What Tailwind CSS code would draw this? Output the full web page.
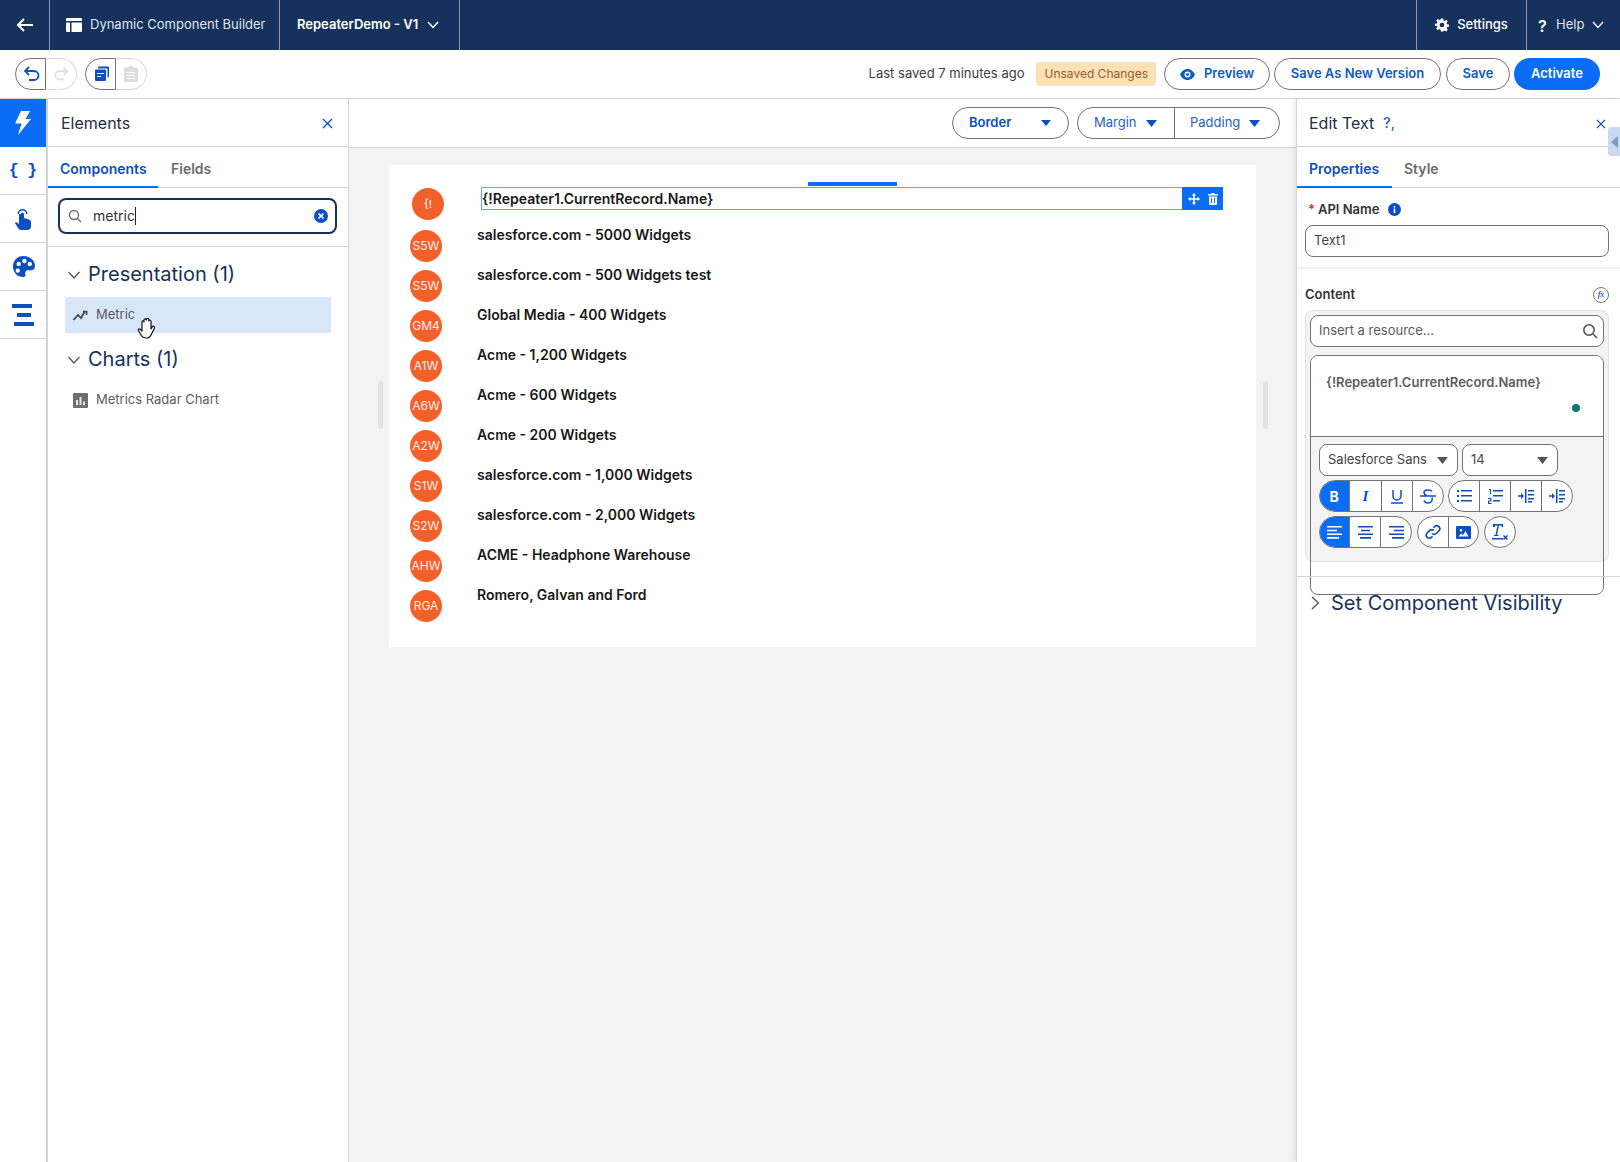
<!doctype html>
<html><head><meta charset="utf-8"><script src="https://cdn.jsdelivr.net/npm/@tailwindcss/browser@4"></script></head>
<body class="font-['Inter','Liberation_Sans',sans-serif]">
<div class="w-[1620px] h-[1162px] overflow-hidden flex flex-col bg-white text-[#181818] relative">
<!-- header -->
<header class="h-[50px] bg-[#16325c] flex text-white text-[13px] shrink-0">
  <div class="w-[50px] border-r border-[#8c9bb0] flex items-center justify-center">
    <svg class="w-[18px] h-[18px]" viewBox="0 0 18 18" fill="none" stroke="white" stroke-width="2"><path d="M17 9H2M8 3L2 9l6 6"/></svg>
  </div>
  <div class="w-[230px] border-r border-[#8c9bb0] flex items-center pl-[16px] gap-[8px] text-[#dfe4ec]">
    <svg class="w-[16px] h-[14px]" viewBox="0 0 16 14" fill="white"><path d="M0 1q0-1 1-1h14q1 0 1 1v2H0zM0 4.500h4V14H1q-1 0-1-1zM5.500 4.500H16V13q0 1-1 1H5.500z"/></svg>
    <span>Dynamic Component Builder</span>
  </div>
  <div class="w-[180px] border-r border-[#8c9bb0] flex items-center pl-[17px] gap-[9px] font-semibold">
    <span>RepeaterDemo - V1</span>
    <svg class="w-[12px] h-[8px]" viewBox="0 0 12 8" fill="none" stroke="white" stroke-width="1.500"><path d="M1 1l5 5.500L11 1"/></svg>
  </div>
  <div class="flex-1"></div>
  <div class="w-[110px] border-l border-[#8c9bb0] flex items-center justify-center gap-[8px] font-medium">
    <svg class="w-[14px] h-[14px]" viewBox="0 0 24 24" fill="white"><path fill-rule="evenodd" d="M10 1h4l.7 3.200 1.900.8L19.400 3.200l2.400 2.900-1.900 2.700.7 1.900 3.300.6v3.800l-3.300.6-.7 1.900 1.900 2.700-2.400 2.900-2.800-1.800-1.900.8L14 23h-4l-.7-3.200-1.900-.8-2.800 1.800-2.400-2.900 1.900-2.700-.7-1.900L.1 13.700V9.900l3.300-.6.700-1.900L2.200 4.700l2.400-2.900L7.400 3.600l1.900-.8zM12 8a4 4 0 100 8 4 4 0 000-8z"/></svg>
    <span>Settings</span>
  </div>
  <div class="w-[94px] border-l border-[#8c9bb0] flex items-center pl-[11px] gap-[8px] text-[#dfe4ec]">
    <span class="text-[16px] font-semibold text-white w-[10px] mt-[1px]">?</span>
    <span>Help</span>
    <svg class="w-[12px] h-[8px]" viewBox="0 0 12 8" fill="none" stroke="white" stroke-width="1.300"><path d="M1 1l5 5.500L11 1"/></svg>
  </div>
</header>
<!-- toolbar -->
<div class="h-[49px] border-b border-[#d4d4d4] flex items-center pl-[15px] pr-[20px] shrink-0">
  <div class="flex h-[32px]">
    <div class="w-[31px] border border-[#747474] rounded-l-full flex items-center justify-center">
      <svg class="w-[18px] h-[18px] ml-[2px]" viewBox="0 0 18 18" fill="none" stroke="#0b4fc1" stroke-width="1.800"><path d="M6 2L2 6l4 4M2 6h9a4.500 4.500 0 010 9H6"/></svg>
    </div>
    <div class="w-[31px] border border-l-0 border-[#d8d8d8] rounded-r-full flex items-center justify-center">
      <svg class="w-[16px] h-[16px]" viewBox="0 0 18 18" fill="none" stroke="#dcdcdc" stroke-width="1.800"><path d="M12 2l4 4-4 4M16 6H7a4.500 4.500 0 000 9h5"/></svg>
    </div>
  </div>
  <div class="flex h-[32px] ml-[8px]">
    <div class="w-[31px] border border-[#747474] rounded-l-full flex items-center justify-center">
      <svg class="w-[16px] h-[16px] ml-[2px]" viewBox="0 0 16 16" fill="#0b4fc1"><path d="M4 1.500q0-1 1-1h9q1 0 1 1v9q0 1-1 1h-.5V3q0-.5-.5-.5H4z"/><path fill-rule="evenodd" d="M2 3.500h9q1 0 1 1V14q0 1-1 1H2q-1 0-1-1V4.500q0-1 1-1zM3 7v1h7V7zM3 10v1h4v-1z"/></svg>
    </div>
    <div class="w-[31px] border border-l-0 border-[#d8d8d8] rounded-r-full flex items-center justify-center">
      <svg class="w-[14px] h-[16px]" viewBox="0 0 14 16" fill="#dcdcdc"><path fill-rule="evenodd" d="M5 0h4v1.500h4q1 0 1 1V15q0 1-1 1H1q-1 0-1-1V2.500q0-1 1-1h4zM3 6v1h8V6zM3 9v1h8V9zM3 12v1h8v-1z"/></svg>
    </div>
  </div>
  <div class="flex-1"></div>
  <span class="text-[13px] text-[#3e3e3c] mr-[12px]">Last saved 7 minutes ago</span>
  <span class="h-[24px] px-[8px] bg-[#fbe1b8] rounded-[3px] text-[12px] text-[#9c5a24] flex items-center mr-[8px]">Unsaved Changes</span>
  <button class="h-[32px] w-[106px] border border-[#747474] rounded-full text-[13px] font-semibold text-[#0b5cc5] flex items-center justify-center gap-[9px] mr-[4px]">
    <svg class="w-[15px] h-[11px]" viewBox="0 0 15 11" fill="#0b5cc5"><path fill-rule="evenodd" d="M7.500 0C11 0 13.700 2.500 15 5.500 13.700 8.500 11 11 7.500 11S1.300 8.500 0 5.500C1.300 2.500 4 0 7.500 0zm0 2.500a3 3 0 100 6 3 3 0 000-6zm0 1.500a1.500 1.500 0 110 3 1.500 1.500 0 010-3z"/></svg>
    Preview</button>
  <button class="h-[32px] w-[167px] border border-[#747474] rounded-full text-[13px] font-semibold text-[#0b5cc5] mr-[5px]">Save As New Version</button>
  <button class="h-[32px] w-[64px] border border-[#747474] rounded-full text-[13px] font-semibold text-[#0b5cc5] mr-[4px]">Save</button>
  <button class="h-[32px] w-[86px] bg-[#0b6cf5] rounded-full text-[13px] font-semibold text-white">Activate</button>
</div>
<!-- main -->
<div class="flex flex-1 min-h-0">
  <!-- rail -->
  <nav class="w-[48px] border-r-2 border-[#d4d4d4] shrink-0 flex flex-col">
    <div class="h-[48px] bg-[#0b6cf5] flex items-center justify-center">
      <svg class="w-[18px] h-[24px]" viewBox="0 0 18 24" fill="white"><path d="M7 0h9L11.500 8H17L4 24l3.500-11.500H1z"/></svg>
    </div>
    <div class="h-[48px] border-b border-[#d4d4d4] flex items-center justify-center text-[#0b4fc1] font-bold text-[17px] gap-[8px] font-['Liberation_Mono',monospace]"><span>{</span><span>}</span></div>
    <div class="h-[48px] border-b border-[#d4d4d4] flex items-center justify-center">
      <svg class="w-[16px] h-[23px]" viewBox="0 0 16 23" fill="#0b4fc1"><path d="M6 7q0-1.500 1.500-1.500T9 7v4l5 1.500q2 .6 2 2.500v4q0 4-4 4H6q-2 0-3-2l-3-5 1-1 3 2V7z"/><path d="M2.500 7a5 5 0 1110 0h-1.500a3.500 3.500 0 10-7 0z"/></svg>
    </div>
    <div class="h-[48px] border-b border-[#d4d4d4] flex items-center justify-center">
      <svg class="w-[23px] h-[23px]" viewBox="0 0 24 24" fill="#0b4fc1"><path fill-rule="evenodd" d="M12 1C5.500 1 1 6 1 12c0 6 4.500 11 10.500 11 2 0 3-1.500 2.500-3-.7-2 .5-4 2.500-4H20c2.500 0 4-2 4-4.500C24 5.500 18.500 1 12 1zM7 7a2.300 2.300 0 110 4.600A2.300 2.300 0 017 7zm6-3a2.300 2.300 0 110 4.600A2.300 2.300 0 0113 4zm5.500 3a2.300 2.300 0 110 4.600 2.300 2.300 0 010-4.600zM6 14a2.300 2.300 0 110 4.600A2.300 2.300 0 016 14z"/></svg>
    </div>
    <div class="h-[48px] border-b border-[#d4d4d4] flex flex-col items-center justify-center gap-[5px]">
      <span class="w-[20px] h-[4px] bg-[#0b4fc1] -ml-[2px]"></span><span class="w-[14px] h-[4px] bg-[#0b4fc1] ml-[2px]"></span><span class="w-[20px] h-[4px] bg-[#0b4fc1] ml-[2px]"></span>
    </div>
  </nav>
  <!-- elements -->
  <aside class="w-[301px] border-r border-[#d4d4d4] shrink-0 flex flex-col">
    <div class="h-[48px] border-b border-[#d4d4d4] flex items-center justify-between pl-[13px] pr-[15px]">
      <span class="text-[16px] text-[#1f2d45]">Elements</span>
      <svg class="w-[11px] h-[11px] mt-[2px]" viewBox="0 0 11 11" stroke="#0b4fc1" stroke-width="1.400"><path d="M1 1l9 9M10 1l-9 9"/></svg>
    </div>
    <div class="h-[41px] border-b border-[#d4d4d4] flex text-[14px] font-semibold">
      <div class="w-[110px] pl-[12px] pt-[11px] text-[#0b4fc1] border-b-2 border-[#0b6cf5] h-[41px]">Components</div>
      <div class="pl-[13px] pt-[11px] text-[#6b6b6b]">Fields</div>
    </div>
    <div class="h-[59px] border-b border-[#d4d4d4] pl-[10px] pt-[10px]">
      <div class="w-[279px] h-[36px] border-2 border-[#16325c] rounded-[8px] flex items-center pl-[8px] pr-[7px]">
        <svg class="w-[14px] h-[14px]" viewBox="0 0 14 14" fill="none" stroke="#706e6b" stroke-width="1.400"><circle cx="6" cy="6" r="4.500"/><path d="M9.500 9.500L13 13"/></svg>
        <span class="ml-[11px] text-[14px] text-[#333] border-r border-[#222] leading-[18px] pr-0">metric</span>
        <span class="flex-1"></span>
        <svg class="w-[14px] h-[14px]" viewBox="0 0 14 14"><circle cx="7" cy="7" r="7" fill="#0b4fc1"/><path d="M4.500 4.500l5 5M9.500 4.500l-5 5" stroke="white" stroke-width="1.600"/></svg>
      </div>
    </div>
    <div class="flex items-center h-[27px] mt-[13px] pl-[20px] gap-[8px] text-[20px] text-[#16325c]">
      <svg class="w-[12px] h-[8px] mt-[3px]" viewBox="0 0 12 8" fill="none" stroke="#555" stroke-width="1.300"><path d="M.5 1l5.500 6 5.500-6"/></svg>
      <span>Presentation (1)</span>
    </div>
    <div class="ml-[17px] mt-[10px] w-[266px] h-[36px] bg-[#d8e6fa] flex items-center pl-[8px] text-[13px] text-[#5c5c5c] gap-[8px]">
      <svg class="w-[15px] h-[12px]" viewBox="0 0 15 12" fill="none" stroke="#444" stroke-width="1.700"><path d="M.5 11L5 6l3 3 4-7M10 2.500h3.500V6"/></svg>
      <span>Metric</span>
    </div>
    <div class="flex items-center h-[27px] mt-[12px] pl-[20px] gap-[8px] text-[20px] text-[#16325c]">
      <svg class="w-[12px] h-[8px] mt-[3px]" viewBox="0 0 12 8" fill="none" stroke="#555" stroke-width="1.300"><path d="M.5 1l5.500 6 5.500-6"/></svg>
      <span>Charts (1)</span>
    </div>
    <div class="ml-[17px] mt-[10px] h-[36px] flex items-center pl-[8px] text-[13px] text-[#5c5c5c] gap-[8px]">
      <svg class="w-[15px] h-[15px]" viewBox="0 0 15 15"><rect width="15" height="15" rx="1" fill="#6f6f6f"/><path d="M3 12V7h2v5zM6.500 12V4h2v8zM10 12V8.500h2V12z" fill="#e8e8e8"/></svg>
      <span>Metrics Radar Chart</span>
    </div>
  </aside>
  <!-- canvas -->
  <main class="flex-1 min-w-0 flex flex-col bg-[#f3f3f3]">
    <div class="h-[49px] bg-white border-b border-[#d4d4d4] flex items-center justify-end pr-[16px] shrink-0 text-[13px]">
      <div class="w-[117px] h-[32px] border border-[#747474] rounded-full flex items-center pl-[16px] pr-[17px] justify-between font-semibold text-[#0b4fc1]">
        <span>Border</span>
        <svg class="w-[10px] h-[6px]" viewBox="0 0 10 6" fill="#0b4fc1"><path d="M0 0h10L5 6z"/></svg>
      </div>
      <div class="ml-[8px] w-[203px] h-[32px] border border-[#747474] rounded-full flex text-[#2c5ec4]">
        <div class="w-[97px] border-r border-[#747474] flex items-center pl-[16px] gap-[9px]"><span>Margin</span><svg class="w-[11px] h-[7px]" viewBox="0 0 11 7" fill="#0b4fc1"><path d="M0 0h11L5.500 7z"/></svg></div>
        <div class="flex items-center pl-[15px] gap-[9px]"><span>Padding</span><svg class="w-[11px] h-[7px]" viewBox="0 0 11 7" fill="#0b4fc1"><path d="M0 0h11L5.500 7z"/></svg></div>
      </div>
    </div>
    <div class="pl-[40px] pt-[17px] relative flex-1">
      <div class="w-[867px] h-[482px] bg-white pt-[23px] relative">
        <!-- first row -->
        <div class="flex items-start h-[41px]">
          <div class="w-[32px] h-[32px] ml-[23px] rounded-full bg-[#f4602a] text-white text-[11px] flex items-center justify-center">{!</div>
          <div class="relative ml-[37px] -mt-[1px] w-[742px] h-[23px] border border-[#62a4ee] text-[14px] font-semibold leading-[21px] text-[#181818]">{!Repeater1.CurrentRecord.Name}
            <div class="absolute -top-[6px] left-[326px] w-[89px] h-[4px] bg-[#0b6cf5]"></div>
            <div class="absolute -top-px -right-px w-[41px] h-[23px] bg-[#0b6cf5] flex items-center justify-center gap-[8px]">
              <svg class="w-[12px] h-[12px]" viewBox="0 0 12 12" fill="white"><path d="M6 0l2.200 2.500H6.800v2.700h2.700V3.800L12 6 9.500 8.200V6.800H6.800v2.700h1.400L6 12 3.800 9.500h1.400V6.800H2.500v1.400L0 6l2.500-2.200v1.400h2.700V2.500H3.800z"/></svg>
              <svg class="w-[10px] h-[12px]" viewBox="0 0 10 12" fill="white"><path fill-rule="evenodd" d="M3.500 0h3v1H10v1.500H0V1h3.500zM1 3.500h8V11q0 1-1 1H2q-1 0-1-1zM3 5v5h1V5zM6 5v5h1V5z"/></svg>
            </div>
          </div>
        </div>
        <!-- rows -->
        <div class="flex items-start h-[40px]"><div class="w-[32px] h-[32px] ml-[21px] mt-[1px] rounded-full bg-[#f4602a] text-white/90 text-[12px] flex items-center justify-center">S5W</div><div class="ml-[35px] -mt-[4px] text-[14px] font-semibold leading-[20px]">salesforce.com - 5000 Widgets</div></div>
        <div class="flex items-start h-[40px]"><div class="w-[32px] h-[32px] ml-[21px] mt-[1px] rounded-full bg-[#f4602a] text-white/90 text-[12px] flex items-center justify-center">S5W</div><div class="ml-[35px] -mt-[4px] text-[14px] font-semibold leading-[20px]">salesforce.com - 500 Widgets test</div></div>
        <div class="flex items-start h-[40px]"><div class="w-[32px] h-[32px] ml-[21px] mt-[1px] rounded-full bg-[#f4602a] text-white/90 text-[12px] flex items-center justify-center">GM4</div><div class="ml-[35px] -mt-[4px] text-[14px] font-semibold leading-[20px]">Global Media - 400 Widgets</div></div>
        <div class="flex items-start h-[40px]"><div class="w-[32px] h-[32px] ml-[21px] mt-[1px] rounded-full bg-[#f4602a] text-white/90 text-[12px] flex items-center justify-center">A1W</div><div class="ml-[35px] -mt-[4px] text-[14px] font-semibold leading-[20px]">Acme - 1,200 Widgets</div></div>
        <div class="flex items-start h-[40px]"><div class="w-[32px] h-[32px] ml-[21px] mt-[1px] rounded-full bg-[#f4602a] text-white/90 text-[12px] flex items-center justify-center">A6W</div><div class="ml-[35px] -mt-[4px] text-[14px] font-semibold leading-[20px]">Acme - 600 Widgets</div></div>
        <div class="flex items-start h-[40px]"><div class="w-[32px] h-[32px] ml-[21px] mt-[1px] rounded-full bg-[#f4602a] text-white/90 text-[12px] flex items-center justify-center">A2W</div><div class="ml-[35px] -mt-[4px] text-[14px] font-semibold leading-[20px]">Acme - 200 Widgets</div></div>
        <div class="flex items-start h-[40px]"><div class="w-[32px] h-[32px] ml-[21px] mt-[1px] rounded-full bg-[#f4602a] text-white/90 text-[12px] flex items-center justify-center">S1W</div><div class="ml-[35px] -mt-[4px] text-[14px] font-semibold leading-[20px]">salesforce.com - 1,000 Widgets</div></div>
        <div class="flex items-start h-[40px]"><div class="w-[32px] h-[32px] ml-[21px] mt-[1px] rounded-full bg-[#f4602a] text-white/90 text-[12px] flex items-center justify-center">S2W</div><div class="ml-[35px] -mt-[4px] text-[14px] font-semibold leading-[20px]">salesforce.com - 2,000 Widgets</div></div>
        <div class="flex items-start h-[40px]"><div class="w-[32px] h-[32px] ml-[21px] mt-[1px] rounded-full bg-[#f4602a] text-white/90 text-[12px] flex items-center justify-center">AHW</div><div class="ml-[35px] -mt-[4px] text-[14px] font-semibold leading-[20px]">ACME - Headphone Warehouse</div></div>
        <div class="flex items-start h-[40px]"><div class="w-[32px] h-[32px] ml-[21px] mt-[1px] rounded-full bg-[#f4602a] text-white/90 text-[12px] flex items-center justify-center">RGA</div><div class="ml-[35px] -mt-[4px] text-[14px] font-semibold leading-[20px]">Romero, Galvan and Ford</div></div>
      </div>
      <div class="absolute left-[29px] top-[233px] w-[5px] h-[48px] bg-[#e3e3e3] rounded"></div>
      <div class="absolute left-[914px] top-[233px] w-[5px] h-[48px] bg-[#e3e3e3] rounded"></div>
    </div>
  </main>
  <!-- right panel -->
  <aside class="w-[324px] shrink-0 border-l border-[#d4d4d4] flex flex-col relative shadow-[-3px_0_4px_rgba(0,0,0,0.06)] bg-white">
    <div class="h-[48px] border-b border-[#d4d4d4] flex items-center pl-[12px] pr-[14px]">
      <span class="text-[16px] text-[#1f2d45]">Edit Text</span>
      <span class="ml-[9px] text-[14px] font-medium text-[#2c5ec4]">?,</span>
      <span class="flex-1"></span>
      <svg class="w-[10px] h-[10px] mt-[2px]" viewBox="0 0 11 11" stroke="#0b4fc1" stroke-width="1.400"><path d="M1 1l9 9M10 1l-9 9"/></svg>
    </div>
    <div class="h-[41px] border-b border-[#d4d4d4] flex text-[14px] font-semibold">
      <div class="w-[95px] pl-[12px] pt-[11px] text-[#0b4fc1] border-b-2 border-[#0b6cf5] h-[41px]">Properties</div>
      <div class="pl-[12px] pt-[11px] text-[#6b6b6b]">Style</div>
    </div>
    <div class="h-[81px] border-b-2 border-[#f0f0f0] pl-[8px] pt-[12px]">
      <div class="flex items-center h-[20px] text-[13px] font-semibold text-[#333] pl-[3px]"><span class="text-[#c23934] mr-[3px]">*</span>API Name
        <svg class="w-[13px] h-[13px] ml-[9px] -mt-[1px]" viewBox="0 0 13 13"><circle cx="6.500" cy="6.500" r="6.500" fill="#0b4fc1"/><rect x="5.700" y="5.500" width="1.600" height="4.500" fill="white"/><rect x="5.700" y="3" width="1.600" height="1.600" fill="white"/></svg>
      </div>
      <div class="w-[304px] h-[32px] mt-[5px] border border-[#747474] rounded-[8px] flex items-center pl-[8px] text-[13px] text-[#444]">Text1</div>
    </div>
    <div class="pl-[8px] pt-[16px]">
      <div class="flex items-center justify-between h-[20px] w-[304px] pr-0 text-[13px] font-semibold text-[#333]">
        <span>Content</span>
        <span class="w-[16px] h-[16px] border border-[#777] rounded-full text-[8px] italic font-semibold text-[#2c5ec4] flex items-center justify-center font-['Liberation_Serif',serif]">fx</span>
      </div>
      <div class="w-[304px] h-[252px] mt-[5px] bg-[#f3f3f3] border border-[#e0e0e0] rounded-[8px] p-[4px]">
        <div class="h-[32px] bg-white border border-[#747474] rounded-[8px] flex items-center pl-[8px] pr-[5px] text-[13px] text-[#5c5c5c] justify-between">
          <span>Insert a resource...</span>
          <svg class="w-[16px] h-[16px]" viewBox="0 0 16 16" fill="none" stroke="#555" stroke-width="1.600"><circle cx="7" cy="7" r="5.200"/><path d="M11 11l4 4"/></svg>
        </div>
        <div class="h-[240px] -mb-[40px] mt-[8px] border border-[#747474] rounded-[8px] bg-transparent overflow-hidden">
          <div class="h-[81px] bg-white border-b border-[#747474] relative pl-[15px] pt-[16px] text-[13px] font-semibold text-[#5c5c5c] leading-[20px]">{!Repeater1.CurrentRecord.Name}
            <span class="absolute left-[261px] top-[48px] w-[8px] h-[8px] rounded-full bg-[#0b7f70]"></span>
          </div>
          <div class="pl-[8px] pt-[7px]">
            <div class="flex gap-[4px]">
              <div class="w-[139px] h-[32px] bg-white border border-[#747474] rounded-[8px] flex items-center justify-between pl-[8px] pr-[9px] text-[13px] text-[#444]"><span>Salesforce Sans</span><svg class="w-[11px] h-[7px]" viewBox="0 0 11 7" fill="#555"><path d="M0 0h11L5.500 7z"/></svg></div>
              <div class="w-[96px] h-[32px] bg-white border border-[#747474] rounded-[8px] flex items-center justify-between pl-[8px] pr-[9px] text-[13px] text-[#444]"><span>14</span><svg class="w-[11px] h-[7px]" viewBox="0 0 11 7" fill="#555"><path d="M0 0h11L5.500 7z"/></svg></div>
            </div>
            <div class="flex gap-[4px] mt-[4px] h-[32px]">
              <div class="flex w-[125px] bg-white border border-[#747474] rounded-full overflow-hidden divide-x divide-[#747474]">
                <div class="flex-1 bg-[#0b6cf5] -my-px -ml-px flex items-center justify-center text-white text-[14px] font-bold">B</div>
                <div class="flex-1 flex items-center justify-center text-[#0b4fc1] text-[15px] font-bold italic font-['Liberation_Serif',serif]">I</div>
                <div class="flex-1 flex items-center justify-center"><svg class="w-[14px] h-[15px]" viewBox="0 0 14 15" fill="none" stroke="#0b4fc1" stroke-width="1.500"><path d="M3 1v6a4 4 0 008 0V1M1 14h12"/></svg></div>
                <div class="flex-1 flex items-center justify-center"><svg class="w-[16px] h-[16px]" viewBox="0 0 16 16" fill="none" stroke="#0b4fc1" stroke-width="1.500"><path d="M12 3.500C11 1.500 4 1 4 4.500c0 1.500 1 2.500 3 3M0 8h16M12 9.500c1 3-1 5.500-4 5.500-2 0-3.500-1-4-2.500"/></svg></div>
              </div>
              <div class="flex w-[125px] bg-white border border-[#747474] rounded-full overflow-hidden divide-x divide-[#747474]">
                <div class="flex-1 flex items-center justify-center"><svg class="w-[15px] h-[12px]" viewBox="0 0 15 12" fill="#0b4fc1"><path d="M0 0h2v2H0zM4 0h11v1.500H4zM0 5h2v2H0zM4 5h11v1.500H4zM0 10h2v2H0zM4 10h11v1.500H4z"/></svg></div>
                <div class="flex-1 flex items-center justify-center"><svg class="w-[15px] h-[15px]" viewBox="0 0 15 15" fill="#0b4fc1"><path d="M1 0h2v5H2V1H1zM5 1h10v1.500H5zM5 6h10v1.500H5zM5 11h7v1.500H5zM0 9h3.500v3.500H1.200V14h2.300v1H0v-3.500h2.300V10H0z"/></svg></div>
                <div class="flex-1 flex items-center justify-center"><svg class="w-[16px] h-[14px]" viewBox="0 0 16 14" fill="#0b4fc1"><path d="M0 6.200h3V4l3 3-3 3V7.800H0zM7 0h1.500v14H7zM10 1h6v1.500h-6zM10 5h6v1.500h-6zM10 9h6v1.500h-6zM10 12h4v1.500h-4z"/></svg></div>
                <div class="flex-1 flex items-center justify-center"><svg class="w-[16px] h-[14px]" viewBox="0 0 16 14" fill="#0b4fc1"><path d="M0 6.200h3V4l3 3-3 3V7.800H0zM7 0h1.500v14H7zM10 1h6v1.500h-6zM10 5h6v1.500h-6zM10 9h6v1.500h-6zM10 12h4v1.500h-4z"/></svg></div>
              </div>
            </div>
            <div class="flex gap-[5px] mt-[4px] h-[32px]">
              <div class="flex w-[93px] bg-white border border-[#747474] rounded-full overflow-hidden divide-x divide-[#747474]">
                <div class="flex-1 bg-[#0b6cf5] -my-px -ml-px flex items-center justify-center"><svg class="w-[15px] h-[13px]" viewBox="0 0 15 13" fill="white"><path d="M0 0h15v1.600H0zM0 3.700h10v1.600H0zM0 7.400h15V9H0zM0 11.100h12v1.600H0z"/></svg></div>
                <div class="flex-1 flex items-center justify-center"><svg class="w-[15px] h-[13px]" viewBox="0 0 15 13" fill="#0b4fc1"><path d="M0 0h15v1.600H0zM3 3.700h9v1.600H3zM0 7.400h15V9H0zM2 11.100h11v1.600H2z"/></svg></div>
                <div class="flex-1 flex items-center justify-center"><svg class="w-[15px] h-[13px]" viewBox="0 0 15 13" fill="#0b4fc1"><path d="M0 0h15v1.600H0zM5 3.700h10v1.600H5zM0 7.400h15V9H0zM3 11.100h12v1.600H3z"/></svg></div>
              </div>
              <div class="flex w-[62px] bg-white border border-[#747474] rounded-full overflow-hidden divide-x divide-[#747474]">
                <div class="flex-1 flex items-center justify-center"><svg class="w-[16px] h-[16px]" viewBox="0 0 16 16" fill="none" stroke="#0b4fc1" stroke-width="1.700"><path d="M7 9.500a3 3 0 004.300 0l2.500-2.500a3 3 0 00-4.300-4.300L8.500 3.700M9 6.500a3 3 0 00-4.300 0L2.200 9a3 3 0 004.300 4.300l1-1"/></svg></div>
                <div class="flex-1 flex items-center justify-center"><svg class="w-[15px] h-[13px]" viewBox="0 0 15 13" fill="#0b4fc1"><path fill-rule="evenodd" d="M1 0h13q1 0 1 1v11q0 1-1 1H1q-1 0-1-1V1q0-1 1-1zm1.500 10.500h10L9.500 5 7 9 5 7.500zM5 3a1.300 1.300 0 100 2.600A1.300 1.300 0 005 3z"/></svg></div>
              </div>
              <div class="w-[32px] bg-white border border-[#747474] rounded-full flex items-center justify-center">
                <svg class="w-[18px] h-[17px]" viewBox="0 0 18 17" fill="#0b4fc1"><path d="M2 0h10v3h-1.500V1.500H8L6 11h1.500v1H3v-1h1.500l2-9.500H4V3H2zM1 14h11v1.500H1zM13 11l1.500 1.500L16 11l1 1-1.500 1.500L17 15l-1 1-1.500-1.500L13 16l-1-1 1.500-1.500L12 12z"/></svg>
              </div>
            </div>
          </div>
        </div>
      </div>
    </div>
    <div class="mt-[14px] border-t border-[#d4d4d4] h-[52px] flex items-center pl-[14px] gap-[11px] text-[20px] text-[#16325c]">
      <svg class="w-[9px] h-[14px]" viewBox="0 0 9 14" fill="none" stroke="#555" stroke-width="1.300"><path d="M1 1l6.500 6L1 13"/></svg>
      <span>Set Component Visibility</span>
    </div>
    <div class="absolute right-0 top-[28px] w-[12px] h-[29px] bg-[#c9d9ee] rounded-l-[3px] flex items-center justify-center">
      <svg class="w-[7px] h-[12px]" viewBox="0 0 7 12" fill="#7a9cc6"><path d="M7 0v12L0 6z"/></svg>
    </div>
  </aside>
</div>
<!-- cursor -->
<svg class="absolute left-[137px] top-[317px] w-[20px] h-[22px]" viewBox="0 0 20 22" fill="white" stroke="#111" stroke-width="1.200" stroke-linejoin="round"><path d="M5 14V5q0-1.200 1-1.200T7 5V3q0-1.200 1.200-1.200T9.400 3v-.5q0-1.200 1.200-1.200t1.200 1.200V4q0-1 1-1t1.200 1.200V12l1-2q1-1.200 2-.5t.4 1.700l-3 6q-1.500 3.800-5 3.800-3.500 0-5-2.500l-3-5q-.5-1 .3-1.500t1.500.3z"/></svg>
</div>
</body></html>
